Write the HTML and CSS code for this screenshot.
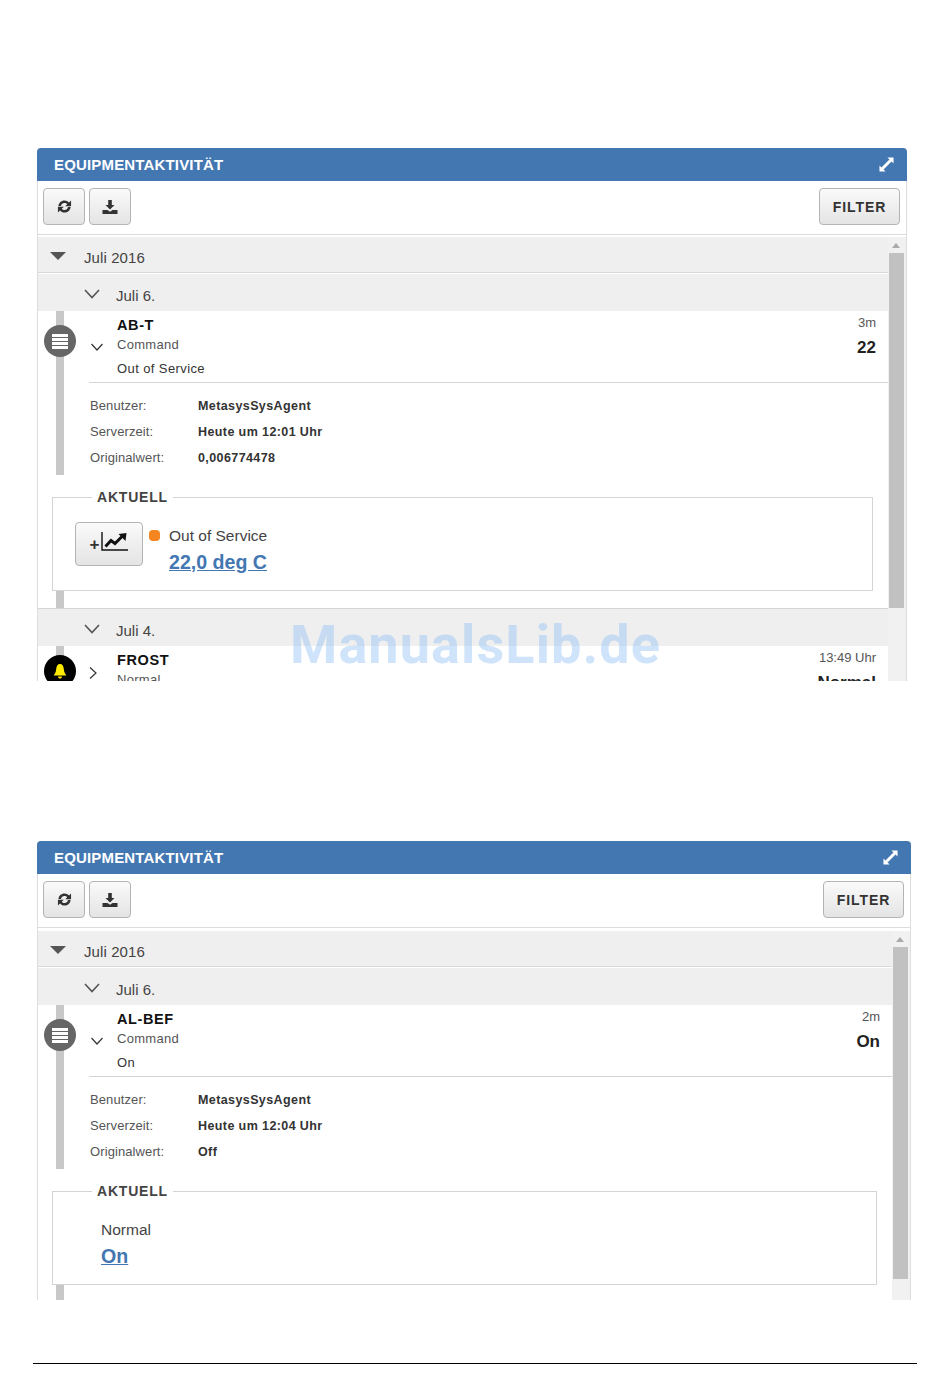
FILE: index.html
```html
<!DOCTYPE html>
<html lang="de">
<head>
<meta charset="utf-8">
<title>Equipmentaktivität</title>
<link rel="stylesheet" href="styles.css">
</head>
<body>
<main class="page">
  <section class="panel panel-a">
    <header class="panel-head">
      <h2>EQUIPMENTAKTIVITÄT</h2>
      <svg class="expand" viewBox="0 0 16 16" width="15" height="15"><path d="M3.500 12.500L12.500 3.500" stroke="#fff" stroke-width="3.200" fill="none"/><path d="M9 0.500H15.500V7Z M0.500 9V15.500H7Z" fill="#fff"/></svg>
    </header>
    <div class="toolbar">
      <button class="btn icon-btn"><svg viewBox="0 0 16 16" width="15" height="15"><path d="M1.500 7.500C1.800 4 4.500 1.500 8 1.500C10 1.500 11.700 2.400 12.800 3.700L15 1.500V7.800H8.700L10.900 5.600C10.200 4.800 9.200 4.300 8 4.300C6 4.300 4.600 5.600 4.300 7.500Z M14.500 8.500C14.200 12 11.500 14.500 8 14.500C6 14.500 4.300 13.600 3.200 12.300L1 14.500V8.200H7.300L5.100 10.400C5.800 11.200 6.800 11.700 8 11.700C10 11.700 11.400 10.400 11.700 8.500Z" fill="#333"/></svg></button>
      <button class="btn icon-btn"><svg viewBox="0 0 16 16" width="16" height="16"><path d="M6.200 1H9.800V6H12.500L8 10.500L3.500 6H6.200Z M0.500 11H5.500L8 12.800L10.500 11H15.500V15H0.500Z" fill="#333"/></svg></button>
      <button class="btn filter">FILTER</button>
    </div>
    <div class="scroller">
      <div class="list">
        <div class="month"><span class="caret"></span><span>Juli 2016</span></div>
        <div class="day"><svg class="chev" viewBox="0 0 16 10" width="16" height="10"><path d="M1 1L8 8.500L15 1" fill="none" stroke="#555" stroke-width="1.600"/></svg><span>Juli 6.</span></div>
        <div class="event">
          <div class="rail rail-long"></div>
          <div class="dot"><span></span><span></span><span></span><span></span></div>
          <div class="event-main">
            <svg class="chev-sm" viewBox="0 0 12 8" width="12" height="8"><path d="M0.500 1L6 7L11.500 1" fill="none" stroke="#333" stroke-width="1.200"/></svg>
            <div class="event-text">
              <div class="title">AB-T</div>
              <div class="sub">Command</div>
              <div class="state">Out of Service</div>
            </div>
            <div class="event-side"><div class="ago">3m</div><div class="val">22</div></div>
          </div>
          <dl class="details">
            <dt>Benutzer:</dt><dd>MetasysSysAgent</dd>
            <dt>Serverzeit:</dt><dd>Heute um 12:01 Uhr</dd>
            <dt>Originalwert:</dt><dd>0,006774478</dd>
          </dl>
        </div>
        <fieldset class="current">
          <legend>AKTUELL</legend>
          <div class="current-body">
            <button class="btn trend"><span class="plus">+</span><svg class="trend-icon" viewBox="0 0 27 19" width="27" height="19"><path d="M1 0V18H27" fill="none" stroke="#111" stroke-width="1.400"/><path d="M4.500 14.500L10 8.500L14 11.500L21 4.500" fill="none" stroke="#111" stroke-width="3"/><path d="M17.500 2L25.500 1L24.500 9Z" fill="#111"/></svg></button>
            <span class="status-dot"></span>
            <div class="current-text">
              <div class="current-state">Out of Service</div>
              <a class="current-val">22,0 deg C</a>
            </div>
          </div>
        </fieldset>
        <div class="stub"></div>
        <div class="day day-next"><svg class="chev" viewBox="0 0 16 10" width="16" height="10"><path d="M1 1L8 8.500L15 1" fill="none" stroke="#555" stroke-width="1.600"/></svg><span>Juli 4.</span></div>
        <div class="event">
          <div class="rail"></div>
          <div class="dot dot-bell"><svg viewBox="0 0 16 16" width="16" height="16"><path d="M8 1C10.500 1 11.500 3 11.800 6C12 9 13 11 14.500 12.500H1.500C3 11 4 9 4.200 6C4.500 3 5.500 1 8 1Z M6 13.500H10C10 15 9 15.500 8 15.500C7 15.500 6 15 6 13.500Z" fill="#ffeb00"/></svg></div>
          <div class="event-main">
            <svg class="chev-right" viewBox="0 0 8 12" width="8" height="12"><path d="M1 0.500L7 6L1 11.500" fill="none" stroke="#333" stroke-width="1.200"/></svg>
            <div class="event-text">
              <div class="title">FROST</div>
              <div class="sub">Normal</div>
            </div>
            <div class="event-side"><div class="ago">13:49 Uhr</div><div class="val">Normal</div></div>
          </div>
        </div>
      </div>
      <div class="scrollbar"><span class="arrow"></span><span class="thumb thumb-a"></span></div>
    </div>
  </section>

  <section class="panel panel-b">
    <header class="panel-head">
      <h2>EQUIPMENTAKTIVITÄT</h2>
      <svg class="expand" viewBox="0 0 16 16" width="15" height="15"><path d="M3.500 12.500L12.500 3.500" stroke="#fff" stroke-width="3.200" fill="none"/><path d="M9 0.500H15.500V7Z M0.500 9V15.500H7Z" fill="#fff"/></svg>
    </header>
    <div class="toolbar">
      <button class="btn icon-btn"><svg viewBox="0 0 16 16" width="15" height="15"><path d="M1.500 7.500C1.800 4 4.500 1.500 8 1.500C10 1.500 11.700 2.400 12.800 3.700L15 1.500V7.800H8.700L10.900 5.600C10.200 4.800 9.200 4.300 8 4.300C6 4.300 4.600 5.600 4.300 7.500Z M14.500 8.500C14.200 12 11.500 14.500 8 14.500C6 14.500 4.300 13.600 3.200 12.300L1 14.500V8.200H7.300L5.100 10.400C5.800 11.200 6.800 11.700 8 11.700C10 11.700 11.400 10.400 11.700 8.500Z" fill="#333"/></svg></button>
      <button class="btn icon-btn"><svg viewBox="0 0 16 16" width="16" height="16"><path d="M6.200 1H9.800V6H12.500L8 10.500L3.500 6H6.200Z M0.500 11H5.500L8 12.800L10.500 11H15.500V15H0.500Z" fill="#333"/></svg></button>
      <button class="btn filter">FILTER</button>
    </div>
    <div class="scroller scroller-b">
      <div class="list">
        <div class="month"><span class="caret"></span><span>Juli 2016</span></div>
        <div class="day"><svg class="chev" viewBox="0 0 16 10" width="16" height="10"><path d="M1 1L8 8.500L15 1" fill="none" stroke="#555" stroke-width="1.600"/></svg><span>Juli 6.</span></div>
        <div class="event">
          <div class="rail rail-long"></div>
          <div class="dot"><span></span><span></span><span></span><span></span></div>
          <div class="event-main">
            <svg class="chev-sm" viewBox="0 0 12 8" width="12" height="8"><path d="M0.500 1L6 7L11.500 1" fill="none" stroke="#333" stroke-width="1.200"/></svg>
            <div class="event-text">
              <div class="title">AL-BEF</div>
              <div class="sub">Command</div>
              <div class="state">On</div>
            </div>
            <div class="event-side"><div class="ago">2m</div><div class="val">On</div></div>
          </div>
          <dl class="details">
            <dt>Benutzer:</dt><dd>MetasysSysAgent</dd>
            <dt>Serverzeit:</dt><dd>Heute um 12:04 Uhr</dd>
            <dt>Originalwert:</dt><dd>Off</dd>
          </dl>
        </div>
        <fieldset class="current">
          <legend>AKTUELL</legend>
          <div class="current-body current-plain">
            <div class="current-text">
              <div class="current-state">Normal</div>
              <a class="current-val">On</a>
            </div>
          </div>
        </fieldset>
        <div class="stub"></div>
      </div>
      <div class="scrollbar"><span class="arrow"></span><span class="thumb thumb-b"></span></div>
    </div>
  </section>
</main>
<div class="watermark">ManualsLib.de</div>
<hr class="rule">
</body>
</html>
```

FILE: styles.css
```css
* { box-sizing: border-box; }
html, body { margin: 0; padding: 0; }
body {
  width: 950px;
  height: 1396px;
  position: relative;
  overflow: hidden;
  background: #fff;
  color: #333;
  font-family: "Liberation Sans", Arial, sans-serif;
  font-size: 14px;
}
.page {
  display: flex;
  flex-direction: column;
  gap: 160px;
  padding: 148px 0 0 37px;
}
.panel {
  display: flex;
  flex-direction: column;
  overflow: hidden;
  background: #fff;
  border-radius: 4px 4px 0 0;
}
.panel-a { width: 870px; height: 533px; }
.panel-b { width: 874px; height: 459px; }
.panel-head {
  flex: none;
  height: 33px;
  background: #4377b2;
  display: flex;
  align-items: center;
  justify-content: space-between;
  padding: 0 13px 0 17px;
  color: #fff;
}
.panel-head h2 {
  margin: 0;
  font-size: 15px;
  font-weight: 700;
  letter-spacing: 0.16px;
}
.toolbar {
  flex: none;
  height: 54px;
  display: flex;
  align-items: flex-start;
  gap: 4px;
  padding: 7px 6px 0 5px;
  border-left: 1px solid #ddd;
  border-right: 1px solid #ddd;
  border-bottom: 1px solid #ddd;
}
.btn {
  font-family: inherit;
  color: #333;
  border: 1px solid #b4b4b4;
  border-radius: 4px;
  background: linear-gradient(#fafafa, #e4e4e4);
  padding: 0;
  display: flex;
  align-items: center;
  justify-content: center;
}
.icon-btn { width: 42px; height: 37px; }
.filter {
  margin-left: auto;
  width: 81px;
  height: 37px;
  font-size: 14px;
  font-weight: 700;
  letter-spacing: 0.9px;
}
.scroller {
  flex: 1;
  min-height: 0;
  display: flex;
  padding-top: 2px;
  border-left: 1px solid #ddd;
  border-right: 1px solid #ddd;
}
.scroller-b { padding-top: 3px; }
.list { flex: 1; min-width: 0; overflow: hidden; }
.month, .day {
  display: flex;
  align-items: center;
  background: #efefef;
  color: #444;
  font-size: 15px;
  padding-top: 5px;
}
.month {
  height: 36px;
  padding-left: 12px;
  gap: 18px;
  border-bottom: 1px solid #d8d8d8;
  letter-spacing: 0.1px;
}
.caret {
  width: 0;
  height: 0;
  margin-top: -3px;
  border-left: 8px solid transparent;
  border-right: 8px solid transparent;
  border-top: 8px solid #555;
}
.day {
  height: 37px;
  margin-top: 1px;
  padding-left: 46px;
  gap: 16px;
}
.day .chev { margin-top: -3px; }
.day-next { margin-top: 0; height: 38px; border-top: 1px solid #d4d4d4; }
.event {
  position: relative;
  padding-left: 51px;
}
.rail {
  position: absolute;
  left: 18px;
  top: 0;
  bottom: 0;
  width: 8px;
  background: #c8c8c8;
}
.dot {
  position: absolute;
  left: 6px;
  top: 14px;
  width: 32px;
  height: 32px;
  border-radius: 50%;
  background: #666;
  display: flex;
  flex-direction: column;
  align-items: center;
  justify-content: center;
  gap: 1px;
}
.dot span { width: 16px; height: 3px; background: #fff; }
.dot-bell { background: #000; top: 9px; }
.event-main {
  display: flex;
  align-items: flex-start;
  height: 72px;
  padding: 6px 12px 0 0;
  border-bottom: 1px solid #d4d4d4;
  position: relative;
}
.chev-sm { flex: none; margin: 26px 14px 0 2px; }
.chev-right { flex: none; margin: 15px 20px 0 0; }
.event-text { flex: 1; }
.title { font-size: 14.500px; font-weight: 700; line-height: 17px; color: #111; letter-spacing: 0.6px; }
.sub { font-size: 13px; line-height: 21px; color: #555; letter-spacing: 0.3px; }
.state { font-size: 13px; line-height: 27px; color: #333; letter-spacing: 0.4px; }
.event-side { text-align: right; }
.ago { font-size: 13px; line-height: 12px; color: #555; }
.val { font-size: 17px; font-weight: 700; line-height: 20px; margin-top: 9px; color: #222; }
.details {
  margin: 0 0 0 1px;
  display: grid;
  grid-template-columns: 108px 1fr;
  grid-auto-rows: 26px;
  align-items: center;
  padding-top: 10px;
  height: 92px;
  font-size: 13px;
}
.details dt { color: #555; letter-spacing: 0.1px; padding-bottom: 2px; }
.details dd { margin: 0; font-size: 12.500px; font-weight: 700; color: #333; letter-spacing: 0.4px; }
.current {
  margin: 15px 15px 0 14px;
  padding: 0 22px;
  height: 101px;
  border: 1px solid #d4d4d4;
  min-width: 0;
}
.current legend {
  margin-left: 17px;
  padding: 0 5px;
  font-size: 14px;
  line-height: 14px;
  font-weight: 700;
  letter-spacing: 0.8px;
  color: #444;
}
.current-body {
  display: flex;
  align-items: flex-start;
  padding-top: 18px;
}
.current-plain { padding-left: 26px; }
.trend {
  width: 68px;
  height: 44px;
  gap: 2px;
  flex: none;
}
.plus { font-size: 17px; font-weight: 700; margin-top: 2px; }
.trend-icon { margin-top: -5px; }
.status-dot {
  width: 11px;
  height: 11px;
  margin: 8px 9px 0 6px;
  border-radius: 4px;
  background: #f5851f;
  flex: none;
}
.current-state { font-size: 15.500px; line-height: 28px; color: #444; }
.current-val {
  display: inline-block;
  font-size: 19.600px;
  font-weight: 700;
  line-height: 25px;
  color: #4377b2;
  text-decoration: underline;
}
.stub {
  width: 8px;
  height: 17px;
  margin-left: 18px;
  background: #c8c8c8;
}
.scrollbar {
  flex: none;
  width: 18px;
  background: #f1f1f1;
  display: flex;
  flex-direction: column;
  align-items: flex-start;
  padding-top: 6px;
}
.arrow {
  width: 0;
  height: 0;
  margin-left: 4px;
  border-left: 4px solid transparent;
  border-right: 4px solid transparent;
  border-bottom: 5px solid #aaa;
}
.thumb { width: 15px; background: #c1c1c1; margin: 5px 0 0 1px; }
.thumb-a { height: 355px; }
.thumb-b { height: 332px; }
.watermark {
  position: absolute;
  left: 290px;
  top: 614px;
  font-family: Roboto, sans-serif;
  font-size: 54px;
  font-weight: 700;
  letter-spacing: 1.1px;
  line-height: 61px;
  color: rgba(140, 190, 245, 0.42);
  white-space: nowrap;
}
.rule {
  position: absolute;
  left: 33px;
  top: 1363px;
  width: 884px;
  margin: 0;
  border: 0;
  border-top: 1px solid #000;
}
```
